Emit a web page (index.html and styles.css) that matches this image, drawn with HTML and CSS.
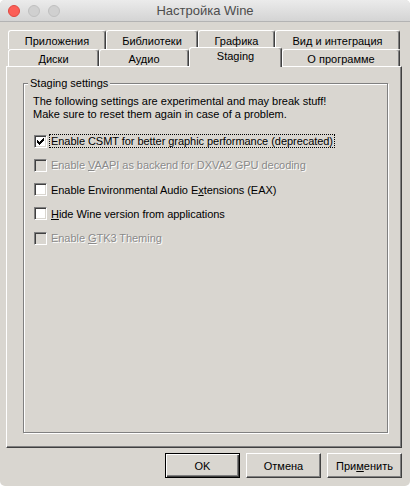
FILE: index.html
```html
<!DOCTYPE html>
<html>
<head>
<meta charset="utf-8">
<link rel="stylesheet" href="styles.css">
</head>
<body>
<div class="window">
  <div class="titlebar">
    <div class="lights"><span class="light red"></span><span class="light"></span><span class="light"></span></div>
    <div class="title">Настройка Wine</div>
    <div></div>
  </div>
  <div class="main">
    <div class="tabs">
      <div class="tabrow back">
        <div class="tab w98">Приложения</div>
        <div class="tab w92">Библиотеки</div>
        <div class="tab w77">Графика</div>
        <div class="tab w125">Вид и интеграция</div>
      </div>
      <div class="tabrow front">
        <div class="tab w91">Диски</div>
        <div class="tab w90">Аудио</div>
        <div class="tab w93 selected">Staging</div>
        <div class="tab w118">О программе</div>
      </div>
    </div>
    <div class="panel">
      <div class="group">
        <span class="legend">Staging settings</span>
        <p class="intro">The following settings are experimental and may break stuff!<br>Make sure to reset them again in case of a problem.</p>
        <ul class="opts">
          <li class="opt">
            <span class="cb"><svg viewBox="0 0 11 11" width="11" height="11" shape-rendering="crispEdges"><path d="M8 2h1v1h-1z M7 3h2v1h-2z M2 4h1v1h-1z M6 4h3v1h-3z M2 5h2v1h-2z M5 5h3v1h-3z M2 6h5v1h-5z M3 7h3v1h-3z M4 8h1v1h-1z" fill="#000"/></svg></span>
            <span class="lbl focus">Enable CSMT for better graphic performance (deprecated)</span>
          </li>
          <li class="opt disabled">
            <span class="cb"></span>
            <span class="lbl">Enable <u>V</u>AAPI as backend for DXVA2 GPU decoding</span>
          </li>
          <li class="opt">
            <span class="cb"></span>
            <span class="lbl">Enable Environmental Audio E<u>x</u>tensions (EAX)</span>
          </li>
          <li class="opt">
            <span class="cb"></span>
            <span class="lbl"><u>H</u>ide Wine version from applications</span>
          </li>
          <li class="opt disabled">
            <span class="cb"></span>
            <span class="lbl">Enable <u>G</u>TK3 Theming</span>
          </li>
        </ul>
      </div>
    </div>
    <div class="buttons">
      <button class="btn default">OK</button>
      <button class="btn">Отмена</button>
      <button class="btn">При<u>м</u>енить</button>
    </div>
  </div>
</div>
</body>
</html>
```
FILE: styles.css
```css
* { box-sizing: border-box; }
html, body { margin: 0; background: #ffffff; }
body {
  font-family: "Liberation Sans", Arial, sans-serif;
  font-size: 11px;
  color: #000;
}
.window {
  width: 410px;
  height: 486px;
  background: #d9d6d0;
  border-radius: 5px;
  overflow: hidden;
  display: flex;
  flex-direction: column;
}
.titlebar {
  height: 22px;
  flex: none;
  display: grid;
  grid-template-columns: 1fr auto 1fr;
  align-items: center;
  background: linear-gradient(#ebebeb, #d4d4d4);
  border-bottom: 1px solid #b3b3b3;
}
.lights { display: flex; gap: 8px; padding-left: 8px; }
.light {
  width: 12px; height: 12px; border-radius: 50%;
  background: #d0d0d0; border: 1px solid #bfbfbf;
}
.light.red { background: #fc5f57; border-color: #de4840; }
.title { font-size: 13px; color: #4d4d4d; }

.main {
  flex: 1;
  display: flex;
  flex-direction: column;
  padding: 8px 8px 0 6px;
}
.tabs { margin: 0 2px; }
.tabrow { display: flex; }
.tabrow.back { height: 19px; }
.tabrow.front { height: 17px; }
.tab {
  display: flex;
  align-items: center;
  justify-content: center;
  border-top: 1px solid #fff;
  border-left: 1px solid #fff;
  border-right: 1px solid #404040;
  box-shadow: inset -1px 0 0 #808080;
  border-radius: 3px 3px 0 0;
  background: #d9d6d0;
  flex: none;
  padding-top: 1px;
}
.w98 { width: 98px; } .w92 { width: 92px; } .w77 { width: 77px; } .w125 { width: 125px; }
.w91 { width: 91px; } .w90 { width: 90px; } .w93 { width: 93px; } .w118 { width: 118px; }
.tab.selected {
  position: relative;
  z-index: 1;
  margin-top: -2px;
  height: 20px;
  align-items: flex-start;
  padding-top: 2px;
}
.panel {
  height: 382px;
  flex: none;
  border: 1px solid;
  border-color: #fff #404040 #404040 #fff;
  box-shadow: inset -1px -1px 0 #808080;
  padding: 16px 13px 14px 16px;
}
.group {
  position: relative;
  height: 100%;
  border: 1px solid #808080;
  box-shadow: 1px 1px 0 #fff, inset 1px 1px 0 #fff;
  padding: 11px 0 0 9px;
}
.legend {
  position: absolute;
  top: -7px;
  left: 4px;
  padding: 0 2px;
  line-height: 13px;
  background: #d9d6d0;
}
.intro { margin: 0; line-height: 13px; }
.opts { list-style: none; margin: 8px 0 0; padding: 0; }
.opt { height: 24.25px; display: flex; align-items: center; gap: 2px; }
.cb {
  width: 13px; height: 13px; flex: none;
  margin-left: 1px;
  border: 1px solid;
  border-color: #808080 #fff #fff #808080;
  box-shadow: inset 1px 1px 0 #404040, inset -1px -1px 0 #d9d6d0;
  background: #fff;
  display: flex;
}
.lbl {
  border: 1px dotted transparent;
  padding: 0 1px;
  line-height: 12px;
  letter-spacing: -0.05px;
}
.lbl.focus { border-color: #000; }
.opt.disabled .cb { background: #d9d6d0; }
.opt.disabled .lbl { color: #8a8a8a; text-shadow: 1px 1px 0 #fff; }

.buttons {
  display: flex;
  justify-content: flex-end;
  gap: 6px;
  padding-top: 5px;
}
.btn {
  width: 75px;
  height: 25px;
  font: inherit;
  color: #000;
  background: #d9d6d0;
  border: 1px solid;
  border-color: #fff #404040 #404040 #fff;
  box-shadow: inset -1px -1px 0 #808080;
  padding: 0;
  border-radius: 0;
}
.btn.default {
  border-color: #000;
  box-shadow: inset 1px 1px 0 #fff, inset -1px -1px 0 #404040, inset -2px -2px 0 #808080;
}
```
